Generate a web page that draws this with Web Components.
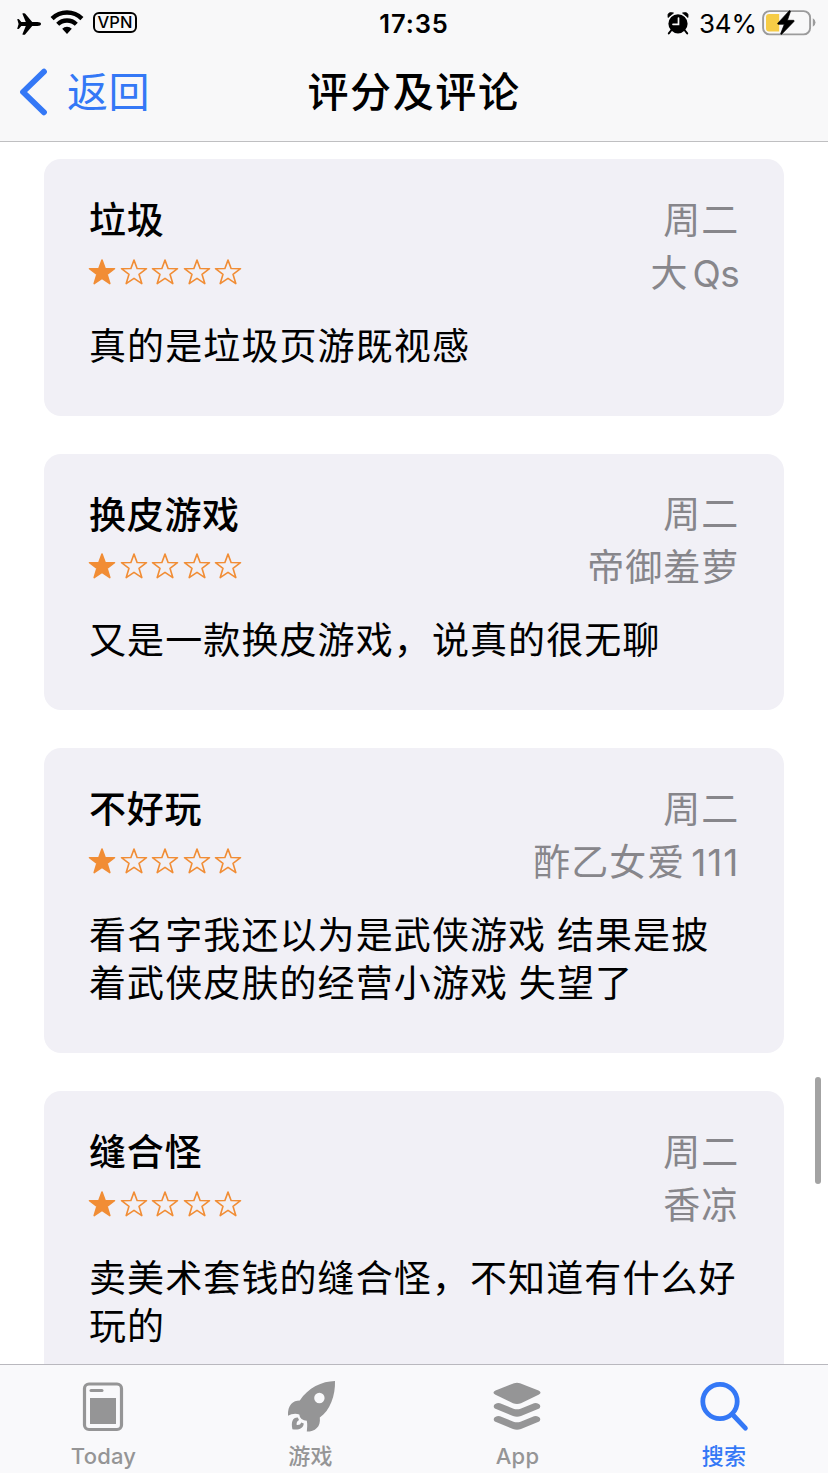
<!DOCTYPE html>
<html lang="zh-CN">
<head>
<meta charset="utf-8">
<title>评分及评论</title>
<style>
html,body{margin:0;height:100%;overflow:hidden;background:#fff}
body{font-family:Inter,"Noto Sans CJK SC",sans-serif;color:#000}
</style>
</head>
<body>
<reviews-screen></reviews-screen>
<script>
const define = (name, html, setup) => customElements.define(name, class extends HTMLElement {
  constructor() {
    super();
    this.attachShadow({mode: 'open'}).innerHTML = html;
  }
  connectedCallback() { if (setup) setup(this, this.shadowRoot); }
});

define('status-bar', `
<style>
:host{display:grid;grid-template-columns:1fr auto 1fr;align-items:center;height:46px;padding:0 12px 0 17px}
.left,.right{display:flex;align-items:center}
.right{justify-content:flex-end}
.time{font-size:25.5px;font-weight:600;letter-spacing:.9px;line-height:46px;transform:translateX(-2.500px)}
.vpn{box-sizing:border-box;width:44px;height:21px;border:2px solid #000;border-radius:6px;font-size:16.5px;font-weight:500;line-height:17.5px;text-align:center;margin-left:9px;margin-top:-2px}
.pct{font-size:26px;letter-spacing:-.1px;line-height:46px;margin:1px 6px 0 10px}
svg{display:block;flex:none}
.left svg:first-child{margin-top:1px}
</style>
<div class="left">
<svg width="25" height="22" viewBox="0 0 25 22"><path d="M24 11c0-1.200-1.500-1.900-3.500-1.900h-5.300L8.300.8Q7.900.3 7.300.3H5.900q-.6 0-.4.6l3.300 8.200H4.300L2.200 6.400Q1.900 6 1.500 6H.7q-.5 0-.4.6L1.600 11 .3 15.400q-.1.600.4.600h.8q.4 0 .7-.4l2.100-2.700h4.500l-3.300 8.200q-.2.600.4.600h1.400q.6 0 1-.5l6.900-8.300h5.300c2 0 3.500-.7 3.500-1.900z"/></svg>
<svg width="34" height="25" viewBox="0 0 34 25" style="margin:-2px 0 0 8px"><g fill="none" stroke="#000"><path d="M2.100 8.600a21.200 21.200 0 0 1 29.800 0" stroke-width="4.400"/><path d="M7.700 14.300a13.300 13.300 0 0 1 18.600 0" stroke-width="4.300"/></g><path d="M12.200 18.800a6.900 6.900 0 0 1 9.600 0L17 23.900z"/></svg>
<span class="vpn">VPN</span>
</div>
<div class="time">17:35</div>
<div class="right">
<svg width="22" height="23" viewBox="0 0 22 23"><circle cx="11" cy="11.800" r="9.600"/><path d="M1 5.500 6.500 1Q2-.3 1 2.500zM21 5.500 15.500 1Q20-.3 21 2.500z" stroke="#000" stroke-width=".8"/><path d="m4.500 18-2.700 3.400M17.500 18l2.700 3.400" stroke="#000" stroke-width="2" stroke-linecap="round"/><path d="M11.500 6v6.300H6" fill="none" stroke="#f8f8f9" stroke-width="1.700" stroke-linecap="round"/></svg>
<span class="pct">34%</span>
<svg width="54" height="27" viewBox="0 0 54 27" style="margin:-2px 0 0 -1px"><rect x="1.100" y="2.100" width="47" height="23.300" rx="6.500" fill="none" stroke="#9b9b9c" stroke-width="1.900"/><path d="M50.800 9.200q2.700 1.600 2.700 4.300t-2.700 4.300z" fill="#9b9b9c"/><path d="M7 5.100h10.200v17.300H7q-3 0-3-3V8.100q0-3 3-3z" fill="#f6cc46"/><path d="M27.300 1.700 15.800 14.200q-.5 1 .5 1.100h6l-3.600 9.300q0 1 .9.700L32 12.400q.5-1-.6-1.100h-6l3-8.700q0-1.100-1.100-.9z" stroke="#000" stroke-width=".7"/></svg>
</div>`);

define('nav-bar', `
<style>
:host{display:grid;grid-template-columns:1fr auto 1fr;align-items:center;height:91px;padding:0 20px}
.back{display:flex;align-items:center;color:#3478f6;font-size:41px;letter-spacing:.6px;line-height:60px}
.back span{margin-left:19px;margin-top:1px}
h1{margin:1px 0 0;font-size:41px;font-weight:500;letter-spacing:1.600px;line-height:60px}
svg{display:block}
.back svg{margin-left:-1px}
</style>
<div class="back"><svg width="29" height="48" viewBox="0 0 29 48"><path d="M25 3.700 4 24l21 20.300" fill="none" stroke="currentColor" stroke-width="5.800" stroke-linecap="round" stroke-linejoin="round"/></svg><span>返回</span></div>
<h1><slot></slot></h1><div></div>`);

define('star-rating', `
<style>
:host{display:flex;gap:3.600px;color:#f18d35}
svg{display:block;width:28px;height:28px}
path{stroke:currentColor;stroke-linejoin:round}
</style>`, (el, root) => {
  const value = Number(el.getAttribute('value'));
  for (let i = 0; i < 5; i++) {
    root.innerHTML += `<svg viewBox="0 0 28 28"><path d="M14 2.100 17.100 10.500 26.500 10.700 19 16.300 21.800 25.600 14 20.300 6.200 25.600 9 16.300 1.500 10.700 10.900 10.500Z" stroke-width="1.600" fill="${i < value ? 'currentColor' : 'none'}"/></svg>`;
  }
});

define('review-card', `
<style>
:host{display:block;box-sizing:border-box;background:#f1f0f6;border-radius:17px;padding:35px 44px 44px 45px}
.row{display:flex;justify-content:space-between;align-items:center;height:53px}
h2{margin:0;font-size:37px;font-weight:500;letter-spacing:.7px;line-height:53px}
.meta{color:#87868b;font-size:37px;letter-spacing:1px;word-spacing:-5.500px;line-height:53px;white-space:nowrap;margin:-1px .7px 0 0}
p{margin:22.500px -4px .5px 0;font-size:37px;letter-spacing:1.100px;word-spacing:-.8px;line-height:48.500px}
star-rating{margin:-4px 0 0 -1px}
</style>
<div class="row"><h2><slot name="title"></slot></h2><div class="meta"><slot name="date"></slot></div></div>
<div class="row"><star-rating value="1"></star-rating><div class="meta"><slot name="author"></slot></div></div>
<p><slot></slot></p>`);

define('tab-item', `
<style>
:host{display:flex;flex-direction:column;align-items:center;color:#959596;flex:1}
:host([active]){color:#3478f6}
.icon{height:56px;margin:12px 1px 0 0}
:host([active]) .icon{margin-right:3px}
.label{font-size:22px;font-weight:500;letter-spacing:.2px;line-height:28px;margin-top:9px}
:host([active]) .label{margin-right:1px}
</style>
<div class="icon"><slot name="icon"></slot></div><div class="label"><slot></slot></div>`);

define('tab-bar', `
<style>
:host{display:flex;box-sizing:border-box;height:109px;background:#f9f9fb;border-top:1px solid #b9b8be}
svg{display:block}
</style>
<tab-item><svg slot="icon" width="52" height="56" viewBox="0 0 52 56"><rect x="7.500" y="7" width="37" height="45.500" rx="4.500" fill="none" stroke="currentColor" stroke-width="3.200"/><path d="M14 13.500h11" stroke="currentColor" stroke-width="3" stroke-linecap="round"/><path d="M13 21h26v26H13z" fill="currentColor"/></svg>Today</tab-item>
<tab-item><svg slot="icon" width="52" height="56" viewBox="0 0 52 56"><path d="M51 4.100C38 4.300 24 11 15.800 23.500 9 23.500 3.500 28 4 38.700 7.500 36.800 11.500 36 15.300 37.500q.2 3.200 2.300 4.500 2.200 1.800 5.200 1.800c.8 3.500.3 7 0 10.800C31 54.600 37 50 35.800 40.500 46 34 51.500 18 51 4.100z" fill="currentColor"/><circle cx="35.400" cy="21" r="5.200" fill="#f9f9fb"/><path d="M13.800 40.600C8.500 40.500 7 45 8.400 52.300c6.500 1 10.800-.8 11.400-5.800l-2.500-1q-.8 2.800-4.600 2.500-.6-3.500 2.300-5z" fill="currentColor"/></svg>游戏</tab-item>
<tab-item><svg slot="icon" width="52" height="56" viewBox="0 0 52 56"><g fill="currentColor"><path d="M23 6.200q3-1 6 0l18.500 7.400q4 2.200 0 4.200L30 26.200q-4 1.600-8 0L4.500 17.800q-4-2.100 0-4.200z"/><path d="M3.800 31.500q-2-1.700-.3-4 2.500-2.400 5.500-1.200l13.500 5.500q3.500 1 7 0L43 26.300q3-1.200 5.500 1.200 1.700 2.300-.3 4L30 39q-4 1.500-8 0z"/><path d="M3.800 44.500q-2-1.700-.3-4 2.500-2.400 5.500-1.200l13.500 5.500q3.500 1 7 0L43 39.300q3-1.200 5.500 1.200 1.700 2.300-.3 4L30 52q-4 1.500-8 0z"/></g></svg>App</tab-item>
<tab-item active><svg slot="icon" width="52" height="56" viewBox="0 0 52 56"><g fill="none" stroke="currentColor" stroke-width="4.800" stroke-linecap="round"><circle cx="23" cy="24.500" r="17.200"/><path d="M36 38 48.400 51.200"/></g></svg>搜索</tab-item>`);

define('reviews-screen', `
<style>
:host{display:grid;grid-template-rows:142px 1222px 109px;width:828px;height:1473px;position:relative;overflow:hidden}
header{box-sizing:border-box;background:#f8f8f9;border-bottom:1px solid #bfbfc1;height:142px}
main{overflow:hidden;padding:17px 44px 0;display:flex;flex-direction:column;gap:38px}
review-card{flex:none}
.latin{letter-spacing:-.5px;word-spacing:-4.500px}
.thumb{position:absolute;right:7px;top:1077px;width:6.500px;height:107px;border-radius:4px;background:#a3a3a3}
</style>
<header><status-bar></status-bar><nav-bar>评分及评论</nav-bar></header>
<main>
<review-card><span slot="title">垃圾</span><span slot="date">周二</span><span slot="author" class="latin">大 Qs</span>真的是垃圾页游既视感</review-card>
<review-card><span slot="title">换皮游戏</span><span slot="date">周二</span><span slot="author">帝御羞萝</span>又是一款换皮游戏，说真的很无聊</review-card>
<review-card><span slot="title">不好玩</span><span slot="date">周二</span><span slot="author">酢乙女爱 111</span>看名字我还以为是武侠游戏 结果是披着武侠皮肤的经营小游戏 失望了</review-card>
<review-card><span slot="title">缝合怪</span><span slot="date">周二</span><span slot="author">香凉</span>卖美术套钱的缝合怪，不知道有什么好玩的</review-card>
</main>
<tab-bar></tab-bar>
<div class="thumb"></div>`);
</script>
</body>
</html>
